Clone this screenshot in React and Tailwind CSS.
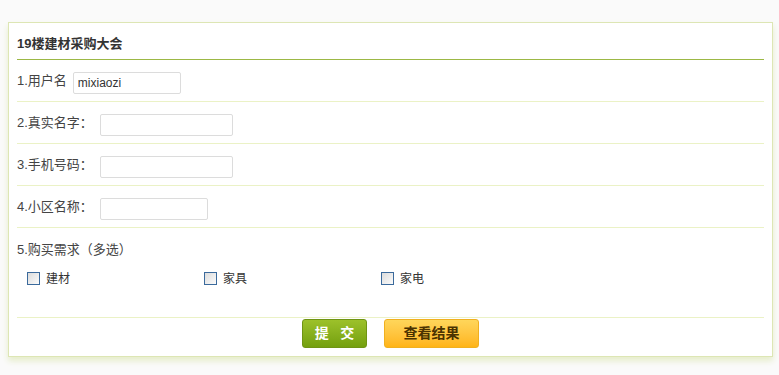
import React, { useState } from 'react';

const font = { fontFamily: '"Liberation Sans", "Noto Sans CJK SC", sans-serif' };

const Checkbox = ({ label, checked, onChange }) => (
  <label className="flex items-center gap-[6px] w-[177px] cursor-pointer">
    <span
      onClick={onChange}
      className="w-[13px] h-[13px] border border-[#3b6a9c] bg-gradient-to-br from-[#dcdcdc] to-[#fbfbfb] flex items-center justify-center text-[10px] leading-none text-[#234]"
    >
      {checked ? '✓' : ''}
    </span>
    <span className="text-[12px] text-[#333]">{label}</span>
  </label>
);

const Row = ({ label, children }) => (
  <div className="h-[42px] flex items-center border-b border-[#ebf2c6]">
    <span className="text-[13px] text-[#444]">{label}</span>
    {children}
  </div>
);

export default function App() {
  const [checks, setChecks] = useState({ 建材: false, 家具: false, 家电: false });
  const toggle = (k) => setChecks(prev => ({ ...prev, [k]: !prev[k] }));

  return (
    <div className="min-h-screen w-[779px] h-[375px] bg-[#fafafa] pt-[22px] pl-[8px]" style={font}>
      <div className="w-[765px] h-[335px] bg-white border border-[#dde6b4] shadow-[0_4px_6px_#e6edcb] px-[8px]">
        {/* 标题 */}
        <div className="h-[37px] flex items-end pb-[6px] border-b border-[#9cb845]">
          <h2 className="text-[13px] font-bold text-[#333]">19楼建材采购大会</h2>
        </div>

        <Row label="1.用户名">
          <input
            defaultValue="mixiaozi"
            className="ml-[6px] mt-[4px] w-[108px] h-[22px] border border-[#dcdcdc] rounded-[2px] px-[4px] text-[12px] text-[#333] outline-none"
          />
        </Row>
        <Row label="2.真实名字：">
          <input className="ml-[7px] mt-[4px] w-[133px] h-[22px] border border-[#dcdcdc] rounded-[2px] px-[4px] text-[12px] outline-none" />
        </Row>
        <Row label="3.手机号码：">
          <input className="ml-[7px] mt-[4px] w-[133px] h-[22px] border border-[#dcdcdc] rounded-[2px] px-[4px] text-[12px] outline-none" />
        </Row>
        <Row label="4.小区名称：">
          <input className="ml-[7px] mt-[4px] w-[108px] h-[22px] border border-[#dcdcdc] rounded-[2px] px-[4px] text-[12px] outline-none" />
        </Row>

        {/* 购买需求 */}
        <div className="h-[90px] border-b border-[#ebf2c6] pt-[12px]">
          <p className="text-[13px] text-[#444]">5.购买需求（多选）</p>
          <div className="flex mt-[10px] pl-[10px]">
            {['建材', '家具', '家电'].map(k => (
              <Checkbox key={k} label={k} checked={checks[k]} onChange={() => toggle(k)} />
            ))}
          </div>
        </div>

        {/* 按钮 */}
        <div className="flex justify-center gap-[17px] pt-[1px]">
          <button className="w-[65px] h-[29px] rounded-[3px] border border-[#6f9414] bg-gradient-to-b from-[#9cc12a] to-[#74a00e] text-white text-[14px] font-bold whitespace-pre">
            {'提   交'}
          </button>
          <button className="w-[95px] h-[29px] rounded-[3px] border border-[#f0b020] bg-gradient-to-b from-[#ffd65a] to-[#ffb414] text-[#4a3200] text-[14px] font-bold whitespace-nowrap">
            查看结果
          </button>
        </div>
      </div>
    </div>
  );
}
